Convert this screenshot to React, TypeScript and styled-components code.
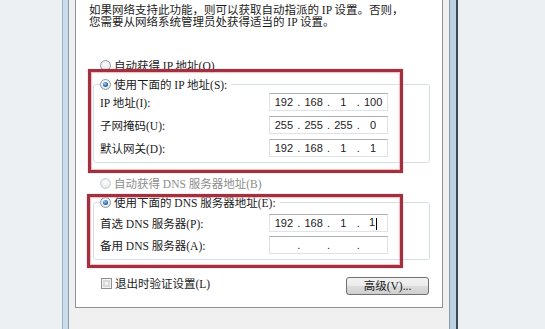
import React from 'react'
import styled, { createGlobalStyle } from 'styled-components'

const GlobalStyle = createGlobalStyle`
  html, body {
    margin: 0;
    padding: 0;
  }
  body {
    width: 545px;
    height: 329px;
    overflow: hidden;
    background: #ecf0f3;
    font-family: "Liberation Serif", "Noto Sans CJK SC", serif;
    font-size: 11.5px;
    color: #1b1b1b;
  }
`

interface IpRow {
  label: string
  octets: string[]
  caret?: boolean
}

const ipRows: IpRow[] = [
  { label: 'IP 地址(I):', octets: ['192', '168', '1', '100'] },
  { label: '子网掩码(U):', octets: ['255', '255', '255', '0'] },
  { label: '默认网关(D):', octets: ['192', '168', '1', '1'] },
]

const dnsRows: IpRow[] = [
  { label: '首选 DNS 服务器(P):', octets: ['192', '168', '1', '1'], caret: true },
  { label: '备用 DNS 服务器(A):', octets: ['', '', '', ''] },
]

const IpField = ({ octets, caret }: { octets: string[]; caret?: boolean }) => (
  <Field>
    {octets.map((o, i) => (
      <React.Fragment key={i}>
        {i > 0 && <Dot>.</Dot>}
        <Octet>
          {o}
          {caret && i === 3 && <Caret />}
        </Octet>
      </React.Fragment>
    ))}
  </Field>
)

const AddressGroup = ({ caption, rows, gap }: { caption: string; rows: IpRow[]; gap: number }) => (
  <Group>
    <Caption>
      <Radio $checked />
      <span>{caption}</span>
    </Caption>
    <Rows $gap={gap}>
      {rows.map((r) => (
        <Row key={r.label}>
          <RowLabel>{r.label}</RowLabel>
          <IpField octets={r.octets} caret={r.caret} />
        </Row>
      ))}
    </Rows>
  </Group>
)

export default function App() {
  return (
    <>
      <GlobalStyle />
      <Desktop>
        <WindowFrame>
          <DialogBody>
            <TabPage>
              <Description>
                如果网络支持此功能，则可以获取自动指派的 IP 设置。否则，
                <br />
                您需要从网络系统管理员处获得适当的 IP 设置。
              </Description>

              <Option $top={31}>
                <Radio />
                <span>自动获得 IP 地址(O)</span>
              </Option>
              <Section $top={7}>
                <AddressGroup caption="使用下面的 IP 地址(S):" rows={ipRows} gap={5} />
                <Highlight $left={12} $top={-9} $width={315} $height={104} />
              </Section>

              <Option $top={14} $disabled>
                <Radio $disabled />
                <span>自动获得 DNS 服务器地址(B)</span>
              </Option>
              <Section $top={7}>
                <AddressGroup caption="使用下面的 DNS 服务器地址(E):" rows={dnsRows} gap={4} />
                <Highlight $left={11} $top={-2} $width={316} $height={74} />
              </Section>

              <Footer>
                <CheckLabel>
                  <Checkbox />
                  <span>退出时验证设置(L)</span>
                </CheckLabel>
                <Button>高级(V)...</Button>
              </Footer>
            </TabPage>
          </DialogBody>
        </WindowFrame>
      </Desktop>
    </>
  )
}

const Desktop = styled.div`
  display: flex;
  height: 329px;
  padding-left: 62px;
`

const WindowFrame = styled.div`
  display: flex;
  width: 396px;
  box-sizing: border-box;
  padding: 0 6px 0 5px;
  border-left: 1px solid #9fb3c6;
  border-right: 2px solid #3d4b56;
  background: linear-gradient(to right, #cadcec, #bcd1e4);
`

const DialogBody = styled.div`
  flex: 1;
  padding: 0 6px;
  border-left: 1px solid #8d9ba8;
  border-right: 1px solid #8d9ba8;
  background: #f0f0f0;
`

const TabPage = styled.div`
  padding: 5px 0 12px 0;
  border: 1px solid #8e9196;
  border-top: none;
  background: #ffffff;
`

const Description = styled.p`
  margin: 0 0 0 13px;
  line-height: 11.5px;
  white-space: nowrap;
`

const Option = styled.div<{ $top: number; $disabled?: boolean }>`
  display: flex;
  align-items: center;
  gap: 3px;
  height: 12px;
  margin: ${(p) => p.$top}px 0 0 24px;
  color: ${(p) => (p.$disabled ? '#8d8d8d' : 'inherit')};
  white-space: nowrap;
`

const Section = styled.div<{ $top: number }>`
  position: relative;
  margin-top: ${(p) => p.$top}px;
`

const Highlight = styled.div<{ $left: number; $top: number; $width: number; $height: number }>`
  position: absolute;
  left: ${(p) => p.$left}px;
  top: ${(p) => p.$top}px;
  width: ${(p) => p.$width}px;
  height: ${(p) => p.$height}px;
  box-sizing: border-box;
  border: 3px solid #a3303e;
  box-shadow: inset 0 0 1px 1px rgba(232, 160, 168, 0.7), 0 0 1px rgba(163, 48, 62, 0.6);
  pointer-events: none;
`

const Group = styled.fieldset`
  width: 337px;
  min-inline-size: 0;
  box-sizing: border-box;
  margin: 0 0 0 17px;
  padding: 0 41px 5px 6px;
  border: 1px solid #d5dfe5;
  border-radius: 3px;
`

const Caption = styled.legend`
  display: flex;
  align-items: center;
  gap: 3px;
  height: 12px;
  padding: 0 4px 0 0;
  white-space: nowrap;
`

const Rows = styled.div<{ $gap: number }>`
  display: flex;
  flex-direction: column;
  gap: ${(p) => p.$gap}px;
  margin-top: ${(p) => (p.$gap === 5 ? 3 : 6)}px;
`

const Row = styled.div`
  display: flex;
  align-items: center;
  height: 18px;
`

const RowLabel = styled.span`
  flex: 1;
  white-space: nowrap;
`

const Field = styled.div`
  display: flex;
  align-items: center;
  width: 119px;
  height: 18px;
  box-sizing: border-box;
  padding: 0 1px;
  border: 1px solid #dfe3e9;
  border-top-color: #abadb3;
  background: #ffffff;
  font-family: "Liberation Sans", Arial, sans-serif;
  font-size: 11px;
  color: #222;
`

const Octet = styled.span`
  flex: 1;
  text-align: center;
  white-space: nowrap;
`

const Dot = styled.span`
  width: 4px;
  text-align: center;
`

const Caret = styled.span`
  display: inline-block;
  width: 1px;
  height: 12px;
  margin-left: 1px;
  vertical-align: middle;
  background: #000;
`

const Radio = styled.span<{ $checked?: boolean; $disabled?: boolean }>`
  position: relative;
  flex: none;
  width: 11px;
  height: 11px;
  box-sizing: border-box;
  border-radius: 50%;
  border: 1px solid ${(p) => (p.$disabled ? '#c9ced3' : '#8e9aa6')};
  background: radial-gradient(circle at 50% 40%, #ffffff 0%, #eceef0 55%, #d2d6da 100%);

  &::after {
    content: '';
    display: ${(p) => (p.$checked ? 'block' : 'none')};
    position: absolute;
    inset: 2px;
    border-radius: 50%;
    background: radial-gradient(circle at 40% 35%, #9cc8f0 0%, #2d6db0 55%, #1a4a80 100%);
  }
`

const Footer = styled.div`
  display: flex;
  justify-content: space-between;
  align-items: flex-start;
  margin-top: 17px;
  padding: 0 13px 0 25px;
`

const CheckLabel = styled.label`
  display: flex;
  align-items: center;
  gap: 3px;
  height: 12px;
  white-space: nowrap;
`

const Checkbox = styled.span`
  flex: none;
  width: 11px;
  height: 11px;
  box-sizing: border-box;
  border: 1px solid #8f8f8f;
  background: #f4f4f4;
  box-shadow: inset 0 0 0 1px #f4f4f4, inset 0 0 0 3px #d6d8da;
`

const Button = styled.button`
  width: 83px;
  height: 18px;
  padding: 0;
  border: 1px solid #707070;
  border-radius: 3px;
  background: linear-gradient(to bottom, #f3f3f3 0%, #ebebeb 48%, #dddddd 52%, #cfcfcf 100%);
  font-family: inherit;
  font-size: 11.5px;
  line-height: 16px;
  color: #1b1b1b;
  white-space: nowrap;
`
